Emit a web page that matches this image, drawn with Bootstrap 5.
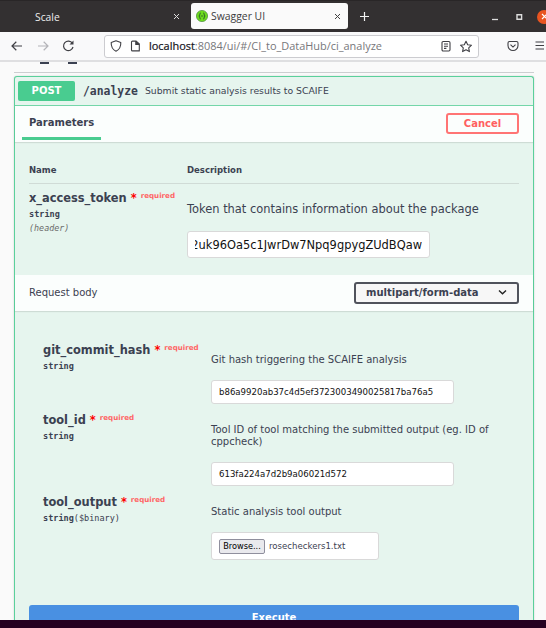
<!DOCTYPE html>
<html lang="en">
<head>
<meta charset="utf-8">
<meta name="viewport" content="width=device-width, initial-scale=1">
<title>Swagger UI</title>
<link rel="stylesheet" href="https://cdn.jsdelivr.net/npm/bootstrap@5.3.0/dist/css/bootstrap.min.css">
<style>
html,body{height:100%;overflow:hidden}
body{font-family:"DejaVu Sans",sans-serif;font-size:10px;line-height:12px;color:#3b4151;background:#fafafa}
svg{display:block;flex:none}
.window{height:628px}
.mono{font-family:"DejaVu Sans Mono",monospace}
.chrome-font{font-family:"Open Sans","Noto Sans",sans-serif}
/* browser frame */
.tabstrip{height:32px;background:#333031;border-top:1px solid #292627;color:#eee}
.tab-idle{width:191px;padding:0 11px 0 35px;font-size:10.3px}
.tab-active{width:157px;height:26px;margin-top:2px;padding:0 7px 0 5px;background:#fafafa;color:#3c3c40;border-radius:3px;font-size:10.4px}
.tab-label{margin-left:3px}
.new-tab{padding-left:12px}
.win-close{width:14px;height:14px;margin-right:-5px;border-radius:50%;background:#e95420}
.toolbar{height:30px;background:#f9f9fa;border-bottom:2px solid #dfdfe1;color:#3f3f44}
.address{width:375px;height:23px;margin-left:25px;padding:0 5px 0 5px;background:#fff;border:1px solid #ccccd0;border-radius:3px;font-size:10.94px;color:#77777b}
.address b{font-weight:400;color:#15141a;-webkit-text-stroke:.2px #15141a}
/* page */
.viewport{height:558px;padding:0 12px 0 14px}
.clipped{height:10px;padding-left:26px;gap:19px}
.clipped i{width:9px;height:2px;background:#3b4151}
.divider{height:1px;background:#ccced0;margin-bottom:3px}
.opblock{border:1px solid #5bd09b;border-bottom:0;border-radius:3px 3px 0 0;background:#e6f5ee;height:545px;box-shadow:0 0 2px rgba(0,0,0,.19)}
.summary{height:29px;padding-left:3px;border-bottom:1px solid #74d6a9}
.method{width:57px;height:20px;line-height:20px;background:#49cc90;color:#fff;border-radius:2px}
.route{font-size:11.42px;margin-left:8px}
.blurb{font-size:9.29px;margin-left:7px}
.section-head{height:36px;background:#fbfefd;padding:0 14px;box-shadow:0 1px 1px rgba(0,0,0,.1)}
.tab-title{width:79px;height:34px;margin-left:-7px;padding:11px 0 0 7px;border-bottom:3px solid #49cc90}
.btn-cancel{width:73px;height:21px;line-height:17px;margin-top:7px;padding:0;font-size:10px;border:2px solid #ff7474;color:#ff6060;border-radius:3px}
.params{height:133px;padding:0 14px}
.param-head{height:42px;padding-top:22px;border-bottom:1px solid #d0dbd6;font-size:8.5px}
.col-name{width:158px;flex:none}
.header-name{padding-top:7px}
.body-name{width:168px;flex:none}
.pname{font-size:11.42px;line-height:14px;white-space:nowrap}
.star{color:#f00;font-size:11.42px;margin-left:4px}
.req{color:#f66;font-size:7.1px;position:relative;top:-4px;margin-left:4px}
.ptype{font-size:8.53px;line-height:12px;margin-top:1px}
.pin{font-size:8.4px;line-height:12px;margin-top:2px;color:#6b6b6b;font-style:italic}
.token-col{padding-top:18px}
.big-desc{font-size:11.43px;line-height:14px;white-space:nowrap;margin-bottom:15px}
.body-col{padding-top:11px}
.body-desc{margin-bottom:14px}
.field{width:243px;height:24px;padding:0 7px;background:#fff;border:1px solid #d9d9d9;border-radius:3px;font-size:8.59px;color:#111}
.field-token{height:27px;padding:0 7px;font-size:11.43px}
.token-clip{width:228px;height:20px;line-height:20px;direction:rtl}
.token-clip bdi{direction:ltr}
.content-type{width:165px;height:22px;padding:0 10px 1px 10px;border:2px solid #50535c;border-radius:3px;background:#f7f7f7}
.body-fields{padding:32px 20px 0 28px;height:294px}
.r-commit{height:70px}
.r-tool{height:82px}
.r-output{height:90px}
.file-field{width:168px;height:28px;color:#3b4151}
.browse{height:15px;line-height:13px;width:46px;margin-right:4px;border:1px solid #8f8f9d;border-radius:2px;background:#e9e9ed;color:#000;font-size:8.2px}
.execute{height:16px;margin:0 14px;background:#4990e2;color:#fff;border-radius:3px 3px 0 0;line-height:25px}
.desk{height:8px;background:#260020}
</style>
</head>
<body>
<div class="window d-flex flex-column overflow-hidden">
  <div class="tabstrip chrome-font d-flex flex-none">
    <div class="tab-idle d-flex align-items-center justify-content-between"><span>Scale</span>
      <svg width="7" height="7" viewBox="0 0 7 7" stroke="#ddd"><path d="M1 1l5 5M6 1L1 6"/></svg></div>
    <div class="tab-active d-flex align-items-center">
      <svg width="12" height="12" viewBox="0 0 12 12"><circle cx="6" cy="6" r="5.6" fill="#6edc1e" stroke="#4a8a3c" stroke-width=".7"/><path d="M4.7 3Q3.8 3 3.8 4v1q0 1-1 1 1 0 1 1v1q0 1 .9 1M7.3 3q.9 0 .9 1v1q0 1 1 1-1 0-1 1v1q0 1-.9 1M5.1 6h1.8" fill="none" stroke="#28562a" stroke-width=".9"/></svg>
      <span class="tab-label flex-grow-1">Swagger UI</span>
      <svg width="7" height="7" viewBox="0 0 7 7" stroke="#444"><path d="M1 1l5 5M6 1L1 6"/></svg></div>
    <div class="new-tab d-flex align-items-center flex-grow-1">
      <svg class="me-auto" width="9" height="9" viewBox="0 0 9 9" stroke="#f2f2f2" stroke-width="1.2"><path d="M4.5 0v9M0 4.500h9"/></svg>
      <svg width="60" height="14" viewBox="0 0 60 14" fill="none"><path d="M15 9.500h6" stroke="#ddd" stroke-width="1.300"/><path d="M40 4.700h4.600v4.600H40z" stroke="#ddd" stroke-width="1.400"/></svg>
      <div class="win-close flex-shrink-0 d-flex align-items-center justify-content-center"><svg width="7" height="7" viewBox="0 0 7 7" stroke="#fff" stroke-width="1.2"><path d="M1 1l5 5M6 1L1 6"/></svg></div>
    </div>
  </div>
  <div class="toolbar d-flex align-items-center flex-none">
    <svg width="79" height="14" viewBox="0 0 79 14" fill="none" stroke="currentColor" stroke-width="1.2"><path d="M22 7H12.3M16.3 2.8L12 7l4.3 4.2"/><path d="M38 7h9.7M43.7 2.8L48 7l-4.3 4.2" stroke="#b4b4b8"/><path d="M72.4 4.3A4.8 4.8 0 1 0 73 8"/><path d="M73.5 1.5v4h-4z" fill="currentColor" stroke="none"/></svg>
    <div class="address chrome-font d-flex align-items-center">
      <svg width="12" height="12" viewBox="0 0 12 12" fill="none" stroke="#3f3f44" stroke-width="1.1"><path d="M6 .8l4.8 1.6c.2 4-1 7-4.8 8.8C2.200 9.400 1 6.400 1.200 2.400z" stroke-linejoin="round"/></svg>
      <svg class="ms-2" width="11" height="12" viewBox="0 0 11 12" fill="none" stroke="#3f3f44" stroke-width="1.100"><path d="M2.500 1.100h3.700L9.300 4v6.900H2.500q-1 0-1-1V2.100q0-1 1-1z" stroke-linejoin="round"/><path d="M5.800 1.100v3.300h3.500" fill="#3f3f44"/></svg>
      <span class="flex-grow-1 ms-2 text-nowrap"><b>localhost</b>:8084/ui/#/CI_to_DataHub/ci_analyze</span>
      <svg width="32" height="13" viewBox="0 0 32 13" fill="none" stroke="#3f3f44" stroke-width="1.100"><rect x="1" y="1.500" width="8" height="9.500" rx="1.200"/><path d="M3 4h4M3 6.200h4M3 8.400h2.400"/><path d="M25 1.200l1.700 3.500 3.800.5-2.800 2.600.7 3.800L25 9.800l-3.400 1.800.7-3.800-2.800-2.600 3.800-.5z" stroke-linejoin="round"/></svg>
    </div>
    <svg width="67" height="14" viewBox="0 0 67 14" fill="none" stroke="#3f3f44" stroke-width="1.100"><path d="M30.500 2.500h7q1.500 0 1.500 1.500v2.500a5 5 0 0 1-10 0V4q0-1.500 1.500-1.500z"/><path d="M31.500 5.700l2.500 2.400 2.500-2.400"/><path d="M56.500 3h8.500M56.500 6.500h8.500M56.500 10h8.500" stroke-width="1.200"/></svg>
  </div>

  <main class="viewport overflow-hidden">
    <div class="clipped d-flex"><i></i><i></i></div>
    <div class="divider"></div>
    <section class="opblock">
      <div class="summary d-flex align-items-center">
        <span class="method fw-bold text-center">POST</span>
        <span class="route mono fw-bold">/analyze</span>
        <span class="blurb">Submit static analysis results to SCAIFE</span>
      </div>
      <div class="section-head d-flex justify-content-between">
        <div class="tab-title fw-bold">Parameters</div>
        <button class="btn btn-cancel fw-bold">Cancel</button>
      </div>
      <div class="params">
        <div class="param-head d-flex fw-bold"><div class="col-name">Name</div><div>Description</div></div>
        <div class="d-flex">
          <div class="col-name header-name">
            <div class="pname"><b>x_access_token</b><b class="star">*</b><b class="req">required</b></div>
            <div class="ptype mono fw-bold">string</div>
            <div class="pin mono">(header)</div>
          </div>
          <div class="token-col">
            <div class="big-desc">Token that contains information about the package</div>
            <div class="field field-token d-flex align-items-center"><div class="token-clip overflow-hidden text-nowrap"><bdi>2uk96Oa5c1JwrDw7Npq9gpygZUdBQaw</bdi></div></div>
          </div>
        </div>
      </div>
      <div class="section-head d-flex justify-content-between align-items-center">
        <span>Request body</span>
        <div class="content-type d-flex align-items-center justify-content-between fw-bold"><span>multipart/form-data</span>
          <svg width="9" height="7" viewBox="0 0 9 7" fill="none" stroke="#222" stroke-width="1.400"><path d="M1 1.500l3.500 3.300L8 1.500"/></svg></div>
      </div>
      <div class="body-fields">
        <div class="r-commit d-flex">
          <div class="body-name">
            <div class="pname"><b>git_commit_hash</b><b class="star">*</b><b class="req">required</b></div>
            <div class="ptype mono fw-bold">string</div>
          </div>
          <div class="body-col"><div class="body-desc">Git hash triggering the SCAIFE analysis</div>
            <div class="field d-flex align-items-center">b86a9920ab37c4d5ef3723003490025817ba76a5</div></div>
        </div>
        <div class="r-tool d-flex">
          <div class="body-name">
            <div class="pname"><b>tool_id</b><b class="star">*</b><b class="req">required</b></div>
            <div class="ptype mono fw-bold">string</div>
          </div>
          <div class="body-col"><div class="body-desc">Tool ID of tool matching the submitted output (eg. ID of cppcheck)</div>
            <div class="field d-flex align-items-center">613fa224a7d2b9a06021d572</div></div>
        </div>
        <div class="r-output d-flex">
          <div class="body-name">
            <div class="pname"><b>tool_output</b><b class="star">*</b><b class="req">required</b></div>
            <div class="ptype mono"><b>string</b>($binary)</div>
          </div>
          <div class="body-col"><div class="body-desc">Static analysis tool output</div>
            <div class="field file-field d-flex align-items-center"><span class="browse text-center">Browse...</span>rosecheckers1.txt</div></div>
        </div>
      </div>
      <div class="execute text-center fw-bold">Execute</div>
    </section>
  </main>
  <div class="desk"></div>
</div>
<script src="https://cdn.jsdelivr.net/npm/bootstrap@5.3.0/dist/js/bootstrap.bundle.min.js"></script>
</body>
</html>
